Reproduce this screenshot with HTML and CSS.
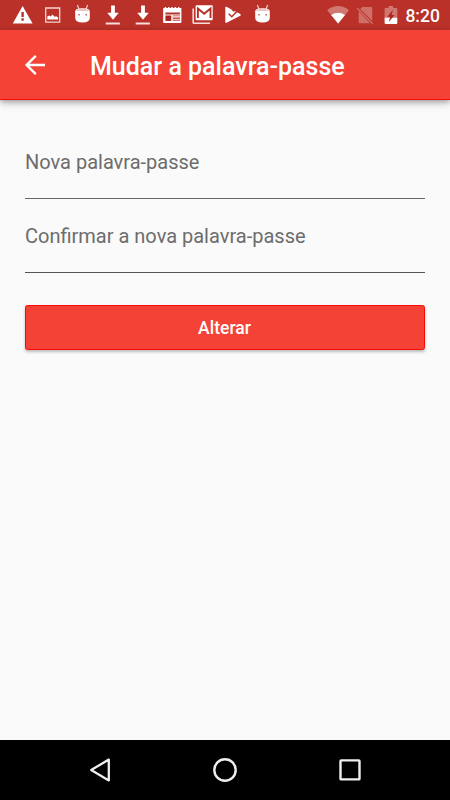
FILE: index.html
```html
<!DOCTYPE html>
<html lang="pt">
<head>
<meta charset="utf-8">
<title>Mudar a palavra-passe</title>
<link rel="stylesheet" href="styles.css">
</head>
<body>
<div class="screen">
  <div class="status">
    <div class="notifications">
      <svg viewBox="7 0 30 30"><path fill="#fff" d="M22.6 6 32.6 23.4H12.8z"/><path fill="#b93129" d="M21.4 12h2.4v5h-2.4zm0 6.3h2.4v2.4h-2.4z"/></svg>
      <svg viewBox="37 0 30 30"><path fill="none" stroke="#f4d4d1" stroke-width="1.3" d="M45.7 8h14v14.2h-14z"/><path fill="#fff" d="M47.3 19.6v-3l2-1 1.5.8 1.7-1.9 2 2.2 1.8-.5 1.8 1.3v2.1z"/></svg>
      <svg viewBox="67 0 30 30"><path fill="none" stroke="#f1cbc7" stroke-width="1.2" d="m77.4 5 1.5 4m8.7-4-1.5 4"/><path fill="#fff" d="M75.2 11.5q0-3.2 7.3-3.2t7.3 3.2v6.3q0 4.8-7.3 4.8t-7.3-4.8z"/><path fill="#efc3bf" d="M76 11q1-2.2 6.5-2.2T89 11z"/><path fill="#c66" d="M78.2 14h1.6v1.5h-1.6zm7.2 0H87v1.5h-1.6z"/></svg>
      <svg viewBox="97 0 30 30"><path fill="#fff" d="M111.1 5.6h3.8v7.2h3.9l-5.8 7-5.8-7h3.9z"/><path fill="#f6dcda" d="M105.7 22.5h14.2v2h-14.2z"/></svg>
      <svg viewBox="127 0 30 30"><path fill="#fff" d="M141.1 5.6h3.8v7.2h3.9l-5.8 7-5.8-7h3.9z"/><path fill="#f6dcda" d="M135.7 22.5h14.2v2h-14.2z"/></svg>
      <svg viewBox="157 0 30 30"><path fill="#fff" fill-rule="evenodd" d="M163.2 8h1.5V7h1.5v1h1.8V7h1.5v1h1.8V7h1.5v1h1.8V7h1.5v1h1.8V7h1.5v1h2v14q0 1-1 1h-16.3q-1 0-1-1zm2.2 4.4v2h14.5v-2zm0 3v5.7h5.9v-5.7zm7.4 0v5.7h7.1v-5.7z"/><path fill="#a4241e" d="M166 15.9h4.7v4.7H166z"/><path fill="#efc3bf" d="M172.8 16h7.1v1.7h-7.1zm0 2.7h7.1v1.7h-7.1z"/></svg>
      <svg viewBox="187 0 30 30"><path fill="none" stroke="#f7dedc" stroke-width="1.6" d="M193.2 8.4v14.1q0 .8.8.8h16"/><rect x="195.6" y="5.2" width="17.1" height="15" rx="1" fill="#fff"/><path fill="none" stroke="#b52e27" stroke-width="1.9" d="M197.9 18V8.6l6.3 5.2 6.3-5.2V18"/></svg>
      <svg viewBox="217 0 30 30"><path fill="#fff" d="M225.3 7.6q0-1.3 1.3-.8l4.9 2.6 1.6 2.1 2.2-.2 4.9 2.7q1.5.9 0 1.8l-13.6 6.9q-1.3.5-1.3-.8z"/><path fill="none" stroke="#b93129" stroke-width="1.5" d="m228.7 13.8 3.1 3 6.2-6.6"/></svg>
      <svg viewBox="247 0 30 30"><path fill="none" stroke="#f1cbc7" stroke-width="1.2" d="m257.4 5 1.5 4m8.7-4-1.5 4"/><path fill="#fff" d="M255.2 11.5q0-3.2 7.3-3.2t7.3 3.2v6.3q0 4.8-7.3 4.8t-7.3-4.8z"/><path fill="#efc3bf" d="M256 11q1-2.2 6.5-2.2T269 11z"/><path fill="#c66" d="M258.2 14h1.6v1.5h-1.6zm7.2 0h1.6v1.5h-1.6z"/></svg>
    </div>
    <div class="system">
      <svg viewBox="322 0 27 30"><path fill="#d17771" d="M327.2 10.2q10.9-8.3 21.8 0L338.1 23.7z"/><path fill="#fff" d="M331.2 15q6.9-4.7 13.8 0l-6.9 8.6z"/></svg>
      <svg viewBox="349 0 27 30"><path fill="#cf6f68" d="m360.2 9.1 2-2.1h8.8q1.2 0 1.2 1.2v12.9zM358.7 11.2l11.4 12.1h-10.2q-1.2 0-1.2-1.2z"/><path stroke="#cf6f68" stroke-width="1.3" d="m357 8 15.7 15.7"/></svg>
      <svg viewBox="376 0 27 30"><path fill="#d17771" d="M388.5 6h4.6v1.9h3.2q1 0 1 1v9h-12.7v-9q0-1 1-1h2.9z"/><path fill="#fff" d="M384.6 17.8h12.7v5.1q0 1-1 1h-10.7q-1 0-1-1z"/><path fill="#ad251e" d="m393 9.7-5.8 7h3l-1.4 5.4 5.7-7.2h-3z"/></svg>
      <span class="clock">8:20</span>
    </div>
  </div>
  <header class="appbar">
    <svg class="back" viewBox="0 0 30 30"><path fill="none" stroke="#fff" stroke-width="2.4" d="M25 15H6.8m9-9.2L6.6 15l9.2 9.2"/></svg>
    <h1>Mudar a palavra-passe</h1>
  </header>
  <main class="form">
    <label class="field">Nova palavra-passe</label>
    <label class="field second">Confirmar a nova palavra-passe</label>
    <button class="submit" type="button">Alterar</button>
  </main>
  <nav class="navbar">
    <svg viewBox="0 0 30 30"><path fill="none" stroke="#eee" stroke-width="2.3" stroke-linejoin="round" d="M23.8 4.6v20.8L6.2 15z"/></svg>
    <svg viewBox="0 0 30 30"><circle cx="15" cy="15" r="10.7" fill="none" stroke="#eee" stroke-width="2.4"/></svg>
    <svg viewBox="0 0 30 30"><rect x="5.5" y="5.4" width="19" height="19" rx=".7" fill="none" stroke="#eee" stroke-width="2.4"/></svg>
  </nav>
</div>
</body>
</html>
```
FILE: styles.css
```css
* { box-sizing: border-box; }
body { margin: 0; font-family: Roboto, "Liberation Sans", sans-serif; }
.screen { width: 450px; height: 800px; display: flex; flex-direction: column; background: #fafafa; overflow: hidden; }
svg { display: block; width: 30px; height: 30px; flex: none; overflow: visible; }
.status { height: 30px; flex: none; display: flex; justify-content: space-between; padding: 0 10px 0 7px; background: #b93129; }
.notifications, .system { display: flex; }
.system svg { width: 27px; }
.clock { width: 34.6px; margin-left: 2.4px; font-size: 17.5px; line-height: 32px; font-weight: 500; color: #fff; white-space: nowrap; }
.appbar { height: 70px; flex: none; display: flex; align-items: center; padding-left: 20px; background: #f44336; border-bottom: 1px solid #f20d08; box-shadow: 0 2px 5px rgba(0,0,0,.28), 0 4px 9px rgba(0,0,0,.12); }
.back { margin-top: 1px; }
h1 { margin: 4px 0 0 40px; font-size: 25px; line-height: 30px; font-weight: 500; color: #fff; white-space: nowrap; }
.form { flex: 1; display: flex; flex-direction: column; padding: 50px 25px 0; }
.field { height: 49px; border-bottom: 1px solid #686868; font-size: 20px; line-height: 24px; color: #6c6c6c; }
.second { margin-top: 25px; border-bottom-color: #555; }
.submit { height: 45px; margin: 32px 0 0; padding: 1px 1px 0 0; border: 1px solid #fa0905; border-radius: 2.5px; background: #f44336; box-shadow: 0 2px 3px rgba(0,0,0,.25); font: 500 17.5px/43px Roboto, "Liberation Sans", sans-serif; color: #fff; }
.navbar { height: 60px; flex: none; display: flex; align-items: center; justify-content: center; gap: 95px; background: #000; }
```
